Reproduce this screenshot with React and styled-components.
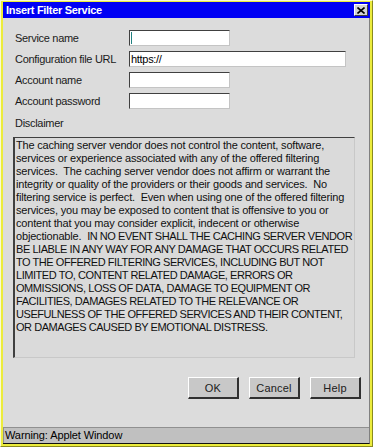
import React from "react";
import styled, { createGlobalStyle } from "styled-components";

const Global = createGlobalStyle`
  html, body { margin: 0; padding: 0; background: #dcdcdc; }
  body { font-family: "Liberation Sans", Arial, sans-serif; }
`;

const Window = styled.div`
  box-sizing: border-box;
  width: 373px;
  height: 447px;
  display: flex;
  flex-direction: column;
  background: #ecec3c;
  border-top: 1px solid #fbfbd0;
  border-left: 1px solid #fbfbd0;
  border-right: 1px solid #8a8a20;
  border-bottom: 1px solid #8a8a20;
  padding: 1px 2px 2px 2px;
`;

const TitleBar = styled.div`
  height: 16px;
  flex: none;
  background: #0000f4;
  display: flex;
  align-items: center;
  justify-content: space-between;
  padding: 0 2px 0 3px;
`;

const Title = styled.span`
  color: #fff;
  font-weight: bold;
  font-size: 11px;
  letter-spacing: -0.3px;
  line-height: 16px;
`;

const CloseButton = styled.div`
  box-sizing: border-box;
  width: 14px;
  height: 12px;
  background: #d4d4d4;
  border-top: 1px solid #fff;
  border-left: 1px solid #fff;
  border-right: 1px solid #404040;
  border-bottom: 1px solid #404040;
  display: flex;
  align-items: center;
  justify-content: center;
`;

const Client = styled.div`
  flex: 1;
  display: flex;
  flex-direction: column;
  background: #dcdcdc;
  border-right: 1px solid #808080;
  border-bottom: 1px solid #101010;
  min-height: 0;
`;

const Body = styled.div`
  flex: 1;
  display: flex;
  flex-direction: column;
  padding: 12px 8px 0 10px;
`;

const Form = styled.div`
  display: grid;
  grid-template-columns: 114px auto;
  row-gap: 5px;
  align-items: center;
  padding-left: 2px;
`;

const Label = styled.span`
  font-size: 11px;
  letter-spacing: -0.3px;
  color: #1a1a1a;
  line-height: 16px;
  white-space: nowrap;
`;

const Input = styled.div`
  box-sizing: border-box;
  height: 16px;
  width: ${(p) => p.$w}px;
  background: #fff;
  border-top: 1px solid #404040;
  border-left: 1px solid #404040;
  border-right: 1px solid #c4c4c4;
  border-bottom: 1px solid #c4c4c4;
  font-size: 11px;
  letter-spacing: -0.3px;
  line-height: 14px;
  padding-left: 1px;
  color: #000;
  position: relative;
`;

const Caret = styled.span`
  position: absolute;
  left: 1px;
  top: 1px;
  width: 1px;
  height: 12px;
  background: #208080;
`;

const DisclaimerLabel = styled(Label)`
  display: block;
  padding-left: 2px;
  margin-top: 6px;
  margin-bottom: 6px;
`;

const TextBox = styled.div`
  box-sizing: border-box;
  width: 342px;
  height: 221px;
  background: #dadada;
  border-top: 1px solid #404040;
  border-left: 2px solid #404040;
  border-right: 1px solid #c8c8c8;
  border-bottom: 1px solid #c8c8c8;
  padding: 1px 0 0 1px;
  font-size: 11px;
  letter-spacing: -0.18px;
  line-height: 13px;
  color: #101010;
  white-space: pre;
  overflow: hidden;
`;

const Caps = styled.span`
  letter-spacing: -0.45px;
`;

const Buttons = styled.div`
  display: flex;
  justify-content: flex-end;
  gap: 10px;
  padding: 19px 0 0 0;
`;

const Button = styled.div`
  box-sizing: border-box;
  width: 51px;
  height: 22px;
  background: #c8c8c8;
  border-top: 1px solid #fff;
  border-left: 1px solid #fff;
  border-right: 2px solid #303030;
  border-bottom: 2px solid #303030;
  font-size: 11px;
  color: #202020;
  display: flex;
  align-items: center;
  justify-content: center;
  letter-spacing: 0.2px;
`;

const StatusBar = styled.div`
  flex: none;
  height: 15px;
  background: #c0c0c0;
  border-top: 1px solid #909090;
  border-left: 1px solid #909090;
  font-size: 11px;
  letter-spacing: -0.1px;
  line-height: 15px;
  color: #000;
  padding-left: 1px;
`;

const plain = [
  "The caching server vendor does not control the content, software,",
  "services or experience associated with any of the offered filtering",
  "services.  The caching server vendor does not affirm or warrant the",
  "integrity or quality of the providers or their goods and services.  No",
  "filtering service is perfect.  Even when using one of the offered filtering",
  "services, you may be exposed to content that is offensive to you or",
  "content that you may consider explicit, indecent or otherwise",
  "objectionable.  ",
].join("\n");

const caps = [
  "IN NO EVENT SHALL THE CACHING SERVER VENDOR",
  "BE LIABLE IN ANY WAY FOR ANY DAMAGE THAT OCCURS RELATED",
  "TO THE OFFERED FILTERING SERVICES, INCLUDING BUT NOT",
  "LIMITED TO, CONTENT RELATED DAMAGE, ERRORS OR",
  "OMMISSIONS, LOSS OF DATA, DAMAGE TO EQUIPMENT OR",
  "FACILITIES, DAMAGES RELATED TO THE RELEVANCE OR",
  "USEFULNESS OF THE OFFERED SERVICES AND THEIR CONTENT,",
  "OR DAMAGES CAUSED BY EMOTIONAL DISTRESS.",
].join("\n");

export default function App() {
  return (
    <>
      <Global />
      <Window>
        <TitleBar>
          <Title>Insert Filter Service</Title>
          <CloseButton>
            <svg width="8" height="7" viewBox="0 0 8 7">
              <path d="M0.5 0.5 L7.5 6.5 M7.5 0.5 L0.5 6.5" stroke="#000" strokeWidth="1.6" />
            </svg>
          </CloseButton>
        </TitleBar>
        <Client>
          <Body>
            <Form>
              <Label>Service name</Label>
              <Input $w={101}><Caret /></Input>
              <Label>Configuration file URL</Label>
              <Input $w={217}>https://</Input>
              <Label>Account name</Label>
              <Input $w={101} />
              <Label>Account password</Label>
              <Input $w={101} />
            </Form>
            <DisclaimerLabel>Disclaimer</DisclaimerLabel>
            <TextBox>
              {plain}
              <Caps>{caps}</Caps>
            </TextBox>
            <Buttons>
              <Button>OK</Button>
              <Button>Cancel</Button>
              <Button>Help</Button>
            </Buttons>
          </Body>
          <StatusBar>Warning: Applet Window</StatusBar>
        </Client>
      </Window>
    </>
  );
}
